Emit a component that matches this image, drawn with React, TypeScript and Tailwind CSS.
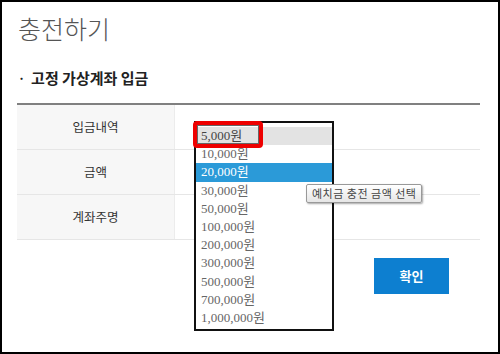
const ko = { fontFamily: '"Noto Sans CJK KR", "Noto Sans", sans-serif' };
const opt = { fontFamily: '"Liberation Serif", "Noto Sans CJK KR", serif' };

const amounts = [
  '5,000원',
  '10,000원',
  '20,000원',
  '30,000원',
  '50,000원',
  '100,000원',
  '200,000원',
  '300,000원',
  '500,000원',
  '700,000원',
  '1,000,000원',
];

const rows = ['입금내역', '금액', '계좌주명'];

export default function App() {
  return (
    <div className="relative w-[500px] h-[354px] overflow-hidden bg-white border-2 border-black" style={ko}>
      {/* Title */}
      <h1 className="ml-[16px] mt-[8px] text-[25px] font-light leading-[36px] text-[#555]">충전하기</h1>

      {/* Section header */}
      <div className="ml-[16px] mt-[22px] flex items-center gap-[6px] text-[15px] font-bold leading-[20px] text-[#222]">
        <span className="text-[12px]">·</span>
        <span>고정 가상계좌 입금</span>
      </div>

      {/* Table */}
      <div className="ml-[15px] mt-[15px] w-[463px] border-t-2 border-[#808080]">
        {rows.map((label) => (
          <div key={label} className="grid grid-cols-[158px_1fr] h-[45px] border-b border-[#e6e6e6]">
            <div className="flex items-center justify-center bg-[#f7f7f7] border-r border-[#ececec] text-[12.5px] text-[#333]">
              {label}
            </div>
            <div />
          </div>
        ))}
      </div>

      {/* Confirm button */}
      <div className="ml-[372px] mt-[18px]">
        <button className="w-[75px] h-[36px] bg-[#0d7fd0] text-white text-[13px] font-bold">확인</button>
      </div>

      {/* Open dropdown list */}
      <div className="absolute left-[192px] top-[119px] w-[140px] h-[210px] bg-white border-2 border-[#111] pt-[4px]" style={opt}>
        {amounts.map((a, i) => (
          <div
            key={a}
            className={
              'h-[18.2px] pl-[5px] text-[13px] leading-[18.2px] ' +
              (i === 0 ? 'bg-[#e3e3e3] text-[#444]' : i === 2 ? 'bg-[#2b9ad8] text-white' : 'text-[#666]')
            }
          >
            {a}
          </div>
        ))}
      </div>

      {/* Red highlight around selected value */}
      <div className="absolute left-[191px] top-[119px] w-[70px] h-[27px] rounded-[4px] border-[4px] border-[#ee0000]">
        <div className="w-full h-full border border-[#666]" />
      </div>

      {/* Tooltip */}
      <div className="absolute left-[304px] top-[182px] h-[19px] px-[5px] flex items-center rounded-[2px] border border-[#999] bg-gradient-to-b from-white to-[#e6e6e6] shadow-[1px_1px_2px_rgba(0,0,0,0.35)] text-[11px] tracking-[0.5px] text-[#444]">
        예치금 충전 금액 선택
      </div>
    </div>
  );
}
